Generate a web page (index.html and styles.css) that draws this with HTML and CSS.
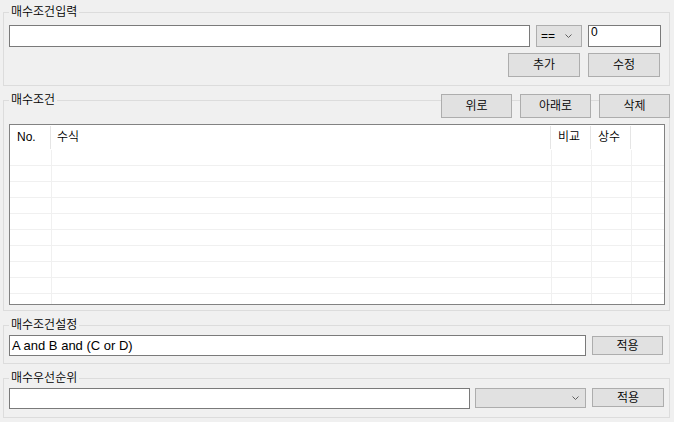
FILE: index.html
```html
<!DOCTYPE html>
<html lang="ko">
<head>
<meta charset="utf-8">
<title>매수조건</title>
<link rel="stylesheet" href="styles.css">
</head>
<body>
<div class="page">
  <fieldset class="group g-input">
    <legend>매수조건입력</legend>
    <div class="row">
      <div class="edit e-formula"></div>
      <div class="combo c-op"><span>==</span><svg class="arrow" width="7" height="4" viewBox="0 0 7 4"><path d="M0.5 0.5 L3.5 3.5 L6.5 0.5" fill="none" stroke="#606060" stroke-width="1"/></svg></div>
      <div class="edit e-const">0</div>
    </div>
    <div class="row btn-row">
      <button class="btn b-wide">추가</button>
      <button class="btn b-wide">수정</button>
    </div>
  </fieldset>

  <fieldset class="group g-list">
    <legend>매수조건</legend>
    <div class="toolbar">
      <button class="btn b-tool">위로</button>
      <button class="btn b-tool">아래로</button>
      <button class="btn b-tool">삭제</button>
    </div>
    <div class="lv">
      <div class="lv-head">
        <div class="hc h1">No.</div>
        <div class="hc h2">수식</div>
        <div class="hc h3">비교</div>
        <div class="hc h4">상수</div>
        <div class="hc h5"></div>
      </div>
      <div class="lv-row"><div class="c1"></div><div class="c2"></div><div class="c3"></div><div class="c4"></div><div class="c5"></div></div>
      <div class="lv-row"><div class="c1"></div><div class="c2"></div><div class="c3"></div><div class="c4"></div><div class="c5"></div></div>
      <div class="lv-row"><div class="c1"></div><div class="c2"></div><div class="c3"></div><div class="c4"></div><div class="c5"></div></div>
      <div class="lv-row"><div class="c1"></div><div class="c2"></div><div class="c3"></div><div class="c4"></div><div class="c5"></div></div>
      <div class="lv-row"><div class="c1"></div><div class="c2"></div><div class="c3"></div><div class="c4"></div><div class="c5"></div></div>
      <div class="lv-row"><div class="c1"></div><div class="c2"></div><div class="c3"></div><div class="c4"></div><div class="c5"></div></div>
      <div class="lv-row"><div class="c1"></div><div class="c2"></div><div class="c3"></div><div class="c4"></div><div class="c5"></div></div>
      <div class="lv-row"><div class="c1"></div><div class="c2"></div><div class="c3"></div><div class="c4"></div><div class="c5"></div></div>
      <div class="lv-row"><div class="c1"></div><div class="c2"></div><div class="c3"></div><div class="c4"></div><div class="c5"></div></div>
      <div class="lv-row"><div class="c1"></div><div class="c2"></div><div class="c3"></div><div class="c4"></div><div class="c5"></div></div>
    </div>
  </fieldset>

  <fieldset class="group g-expr">
    <legend>매수조건설정</legend>
    <div class="row">
      <div class="edit e-expr">A and B and (C or D)</div>
      <button class="btn b-apply">적용</button>
    </div>
  </fieldset>

  <fieldset class="group g-prio">
    <legend>매수우선순위</legend>
    <div class="row">
      <div class="edit e-prio"></div>
      <div class="combo c-prio"><span></span><svg class="arrow" width="7" height="4" viewBox="0 0 7 4"><path d="M0.5 0.5 L3.5 3.5 L6.5 0.5" fill="none" stroke="#606060" stroke-width="1"/></svg></div>
      <button class="btn b-apply2">적용</button>
    </div>
  </fieldset>
</div>
</body>
</html>
```

FILE: styles.css
```css
* { box-sizing: border-box; }
html, body { margin: 0; }
body {
  width: 674px;
  height: 422px;
  overflow: hidden;
  background: #f0f0f0;
  color: #000;
  font-family: "Liberation Sans", "Noto Sans CJK KR", sans-serif;
  font-size: 12px;
  font-weight: 350;
}
.page { padding: 5px 4px 0 3px; }

.group {
  margin: 0 0 7px;
  border: 1px solid #dcdcdc;
  padding: 0 4px 0 5px;
  min-width: 0;
}
.group legend {
  padding: 0 2px;
  height: 14px;
  line-height: 14px;
  font-size: 12px;
}

.row { display: flex; gap: 6px; }

.edit {
  background: #fff;
  border: 1px solid #7a7a7a;
  padding: 0 2px;
  height: 22px;
  display: flex;
  align-items: center;
  white-space: nowrap;
  overflow: hidden;
}
.combo {
  background: #e1e1e1;
  border: 1px solid #adadad;
  height: 22px;
  display: flex;
  align-items: center;
  justify-content: space-between;
}
.arrow { display: block; }

.btn {
  margin: 0;
  padding: 0;
  background: #e1e1e1;
  border: 1px solid #adadad;
  border-radius: 0;
  font-family: "Liberation Sans", "Noto Sans CJK KR", sans-serif;
  font-size: 12px;
  font-weight: 350;
  color: #000;
  line-height: 1;
}

/* group 1 */
.g-input { padding: 6px 8px 8px 5px; }
.e-formula { width: 521px; }
.c-op { width: 46px; padding: 0 9px 0 4px; }
.e-const { width: 73px; align-items: flex-start; padding-top: 0; line-height: 13px; }
.btn-row { justify-content: flex-end; gap: 8px; margin-top: 6px; padding-right: 1px; }
.b-wide { width: 72px; height: 24px; }

/* group 2 */
.g-list { padding: 0 4px 5px 5px; }
.toolbar {
  display: flex;
  justify-content: flex-end;
  gap: 8px;
  margin: -13px -5px 6px 0;
}
.b-tool { width: 71px; height: 24px; }

.lv {
  width: 656px;
  height: 181px;
  border: 1px solid #828282;
  background: #fff;
  overflow: hidden;
}
.lv-head { display: flex; height: 25px; }
.hc {
  line-height: 25px;
  padding-left: 6px;
  white-space: nowrap;
  background: linear-gradient(#e5e5e5, #e5e5e5) right 0 top 1px / 1px 23px no-repeat;
}
.h1 { width: 41px; padding-left: 7px; }
.h2 { width: 500px; }
.h3 { width: 40px; padding-left: 7px; }
.h4 { width: 40px; padding-left: 7px; }
.h5 { flex: 1; background: none; }

.lv-row { display: flex; height: 16px; }
.lv-row > div { border-bottom: 1px solid #f0f0f0; border-right: 1px solid #f0f0f0; }
.lv-row .c1 { width: 42px; }
.lv-row .c2 { width: 500px; }
.lv-row .c3 { width: 40px; }
.lv-row .c4 { width: 40px; }
.lv-row .c5 { flex: 1; border-right: 0; }

/* group 3 */
.g-expr { padding: 3px 6px 7px 5px; }
.g-expr .row { align-items: center; }
.e-expr { width: 577px; height: 21px; font-size: 13px; }
.b-apply { width: 71px; height: 19px; }

/* group 4 */
.g-prio { padding: 3px 5px 8px 5px; margin-bottom: 0; }
.g-prio .row { align-items: flex-start; }
.e-prio { width: 461px; height: 21px; margin-right: -1px; }
.c-prio { width: 111px; height: 20px; padding: 0 6px 0 4px; }
.b-apply2 { width: 72px; height: 19px; }
```
